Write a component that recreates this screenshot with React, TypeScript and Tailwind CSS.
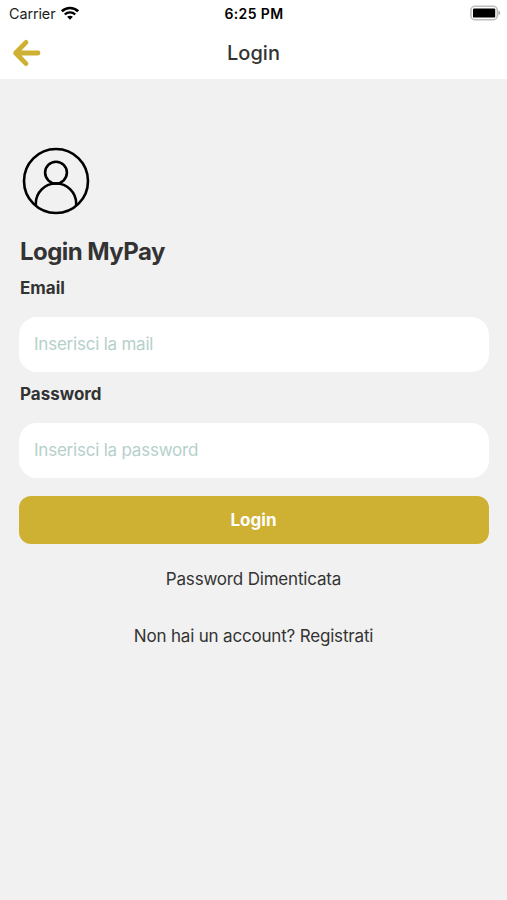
import { useState } from "react";

function StatusBar() {
  return (
    <div className="grid h-7 grid-cols-3 items-center pl-[9px] pr-[6px] text-[14px] leading-none text-[#1c1c1c]">
      <div className="flex items-center gap-[6px]">
        <span className="text-[14.4px] tracking-[-0.1px]">Carrier</span>
        <svg className="mb-[2px]" width="18" height="14" viewBox="0 0 18 14" fill="none">
          <path d="M0.9 5.3C5.3 0.9 12.7 0.9 17.1 5.3" stroke="#000" strokeWidth="2.6" />
          <path d="M3.8 8.5C6.6 5.7 11.4 5.7 14.2 8.5" stroke="#000" strokeWidth="2.4" />
          <path d="M9 13.8L6.1 10.8C7.7 9.3 10.3 9.3 11.9 10.8Z" fill="#000" />
        </svg>
      </div>
      <span className="pr-[2px] text-center text-[14px] font-semibold tracking-[0.4px] text-black">6:25 PM</span>
      <svg className="mb-[2px] justify-self-end" width="31" height="16" viewBox="0 0 31 16" fill="none">
        <rect x="0.9" y="1.3" width="26.4" height="13.4" rx="4" stroke="#bdbdbd" strokeWidth="1.6" />
        <rect x="3" y="3.4" width="22.2" height="9.2" rx="1.2" fill="#000" />
        <path d="M28.4 5.6C30.8 6.8 30.8 9.2 28.4 10.4Z" fill="#a8a8a8" />
      </svg>
    </div>
  );
}

function Header() {
  return (
    <header className="bg-white">
      <StatusBar />
      <div className="grid h-[51px] grid-cols-3 items-center pb-[2px] pl-3 pr-3">
        <button type="button" aria-label="Indietro">
          <svg width="29" height="28" viewBox="0 0 29 28" fill="none">
            <path
              d="M14 3.4L3.6 14L14 24.6M4 14H26"
              stroke="#ceb033"
              strokeWidth="4.8"
              strokeLinecap="round"
              strokeLinejoin="round"
            />
          </svg>
        </button>
        <h1 className="text-center text-[20px] font-medium leading-none text-[#333333]">Login</h1>
      </div>
    </header>
  );
}

function Avatar() {
  return (
    <svg width="68" height="68" viewBox="0 0 68 68" fill="none" stroke="#000" strokeWidth="2.6">
      <circle cx="34" cy="34" r="32" />
      <circle cx="34" cy="25.6" r="10.9" />
      <path d="M13.8 58.4V56.5A20.2 20 0 0 1 54.2 56.5V58.4" />
    </svg>
  );
}

type FieldProps = {
  label: string;
  type: string;
  placeholder: string;
  value: string;
  onChange: (value: string) => void;
};

function Field({ label, type, placeholder, value, onChange }: FieldProps) {
  return (
    <label className="block">
      <span className="block pl-px text-[17px] font-bold leading-6 text-[#333333]">{label}</span>
      <input
        type={type}
        placeholder={placeholder}
        value={value}
        onChange={(e) => onChange(e.target.value)}
        className="mt-[17px] block h-[55px] w-full rounded-[18px] bg-white px-[15px] pb-px text-[17px] tracking-[-0.22px] text-[#333333] outline-none placeholder:text-[#b5d0cb]"
      />
    </label>
  );
}

export default function App() {
  const [email, setEmail] = useState("");
  const [password, setPassword] = useState("");

  return (
    <div className="min-h-screen bg-[#f1f1f1] font-['Inter','Liberation_Sans',sans-serif]">
      <Header />
      <main className="pl-[19px] pr-[18px] pt-[68px] text-[#333333]">
        <div className="pl-[3px]">
          <Avatar />
        </div>
        <h2 className="mt-[21px] pl-px text-[24px] font-bold leading-8 tracking-[-0.55px]">
          Login MyPay
        </h2>

        <form className="mt-2" onSubmit={(e) => e.preventDefault()}>
          <div className="flex flex-col gap-[10px]">
            <Field
              label="Email"
              type="email"
              placeholder="Inserisci la mail"
              value={email}
              onChange={setEmail}
            />
            <Field
              label="Password"
              type="password"
              placeholder="Inserisci la password"
              value={password}
              onChange={setPassword}
            />
          </div>
          <button
            type="submit"
            className="mt-[18px] h-12 w-full rounded-xl bg-[#ceb033] pr-px pt-[2px] text-[17px] font-bold text-white"
          >
            Login
          </button>
        </form>

        <div className="mt-[23px] flex flex-col items-center gap-[33px] pr-px text-[17px] leading-6 tracking-[-0.18px]">
          <a href="#">Password Dimenticata</a>
          <a href="#">Non hai un account? Registrati</a>
        </div>
      </main>
    </div>
  );
}
